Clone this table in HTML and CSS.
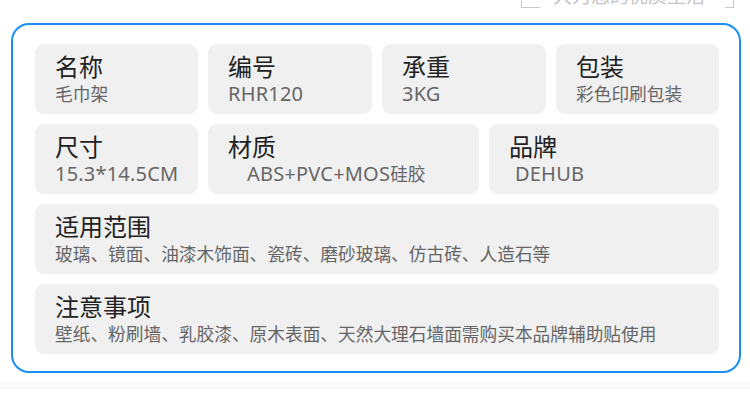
FILE: index.html
```html
<!DOCTYPE html>
<html lang="zh-CN">
<head>
    <meta charset="UTF-8">
    <meta name="viewport" content="width=device-width, initial-scale=1.0">
    <title>产品参数</title>
    <link rel="stylesheet" href="styles.css">
</head>
<body>
    <div class="slogan">
        <span class="bracket bracket-left"></span>
        <span class="slogan-text">大为您的优质生活</span>
        <span class="bracket bracket-right"></span>
    </div>
    <div class="spec-box">
        <div class="spec-row row-four">
            <div class="cell"><div class="label">名称</div><div class="value">毛巾架</div></div>
            <div class="cell"><div class="label">编号</div><div class="value"><span class="latin">RHR120</span></div></div>
            <div class="cell"><div class="label">承重</div><div class="value"><span class="latin">3KG</span></div></div>
            <div class="cell"><div class="label">包装</div><div class="value">彩色印刷包装</div></div>
        </div>
        <div class="spec-row row-three">
            <div class="cell"><div class="label">尺寸</div><div class="value"><span class="latin">15.3*14.5CM</span></div></div>
            <div class="cell"><div class="label">材质</div><div class="value indent-wide"><span class="latin">ABS+PVC+MOS</span>硅胶</div></div>
            <div class="cell"><div class="label">品牌</div><div class="value indent-small"><span class="latin">DEHUB</span></div></div>
        </div>
        <div class="cell"><div class="label">适用范围</div><div class="value">玻璃、镜面、油漆木饰面、瓷砖、磨砂玻璃、仿古砖、人造石等</div></div>
        <div class="cell"><div class="label">注意事项</div><div class="value">壁纸、粉刷墙、乳胶漆、原木表面、天然大理石墙面需购买本品牌辅助贴使用</div></div>
    </div>
    <div class="footer"></div>
</body>
</html>
```

FILE: styles.css
```css
body {
    margin: 0;
    padding: 0;
    background: #fff;
    font-family: "Noto Sans CJK SC", "Noto Sans", sans-serif;
    width: 750px;
    height: 411px;
    overflow: hidden;
}
.slogan {
    height: 23px;
    position: relative;
}
.slogan-text {
    position: absolute;
    left: 553px;
    top: -17px;
    font-size: 19px;
    line-height: 24px;
    color: #c4c4c4;
}
.bracket {
    position: absolute;
    top: -4px;
    height: 11px;
    border-bottom: 1px solid #c8c8c8;
}
.bracket-left {
    left: 521px;
    width: 18px;
    border-left: 1px solid #c8c8c8;
}
.bracket-right {
    left: 725px;
    width: 8px;
    border-right: 1px solid #c8c8c8;
}
.spec-box {
    margin: 0 9px 0 11px;
    height: 350px;
    box-sizing: border-box;
    border: 2px solid #1a8ff2;
    border-radius: 18px;
    padding: 19px 20px 18px 22px;
    display: flex;
    flex-direction: column;
    gap: 10px;
}
.spec-row {
    display: grid;
    gap: 10px;
}
.row-four {
    grid-template-columns: 163px 164px 164px 163px;
}
.row-three {
    grid-template-columns: 163px 271px 230px;
}
.cell {
    background: #f0f0f0;
    border-radius: 9px;
    height: 70px;
    box-sizing: border-box;
    padding: 6px 20px 10px 20px;
}
.label {
    font-size: 24px;
    line-height: 32px;
    color: #222;
}
.value {
    font-size: 17.7px;
    line-height: 22px;
    color: #666;
    white-space: nowrap;
}
.latin {
    font-family: "Noto Sans", "Noto Sans CJK SC", sans-serif;
    font-size: 20px;
    letter-spacing: 0.2px;
}
.indent-wide {
    padding-left: 19px;
}
.indent-small {
    padding-left: 6px;
}
.footer {
    margin-top: 10px;
    height: 6px;
    background: #f9f9f9;
}
```
